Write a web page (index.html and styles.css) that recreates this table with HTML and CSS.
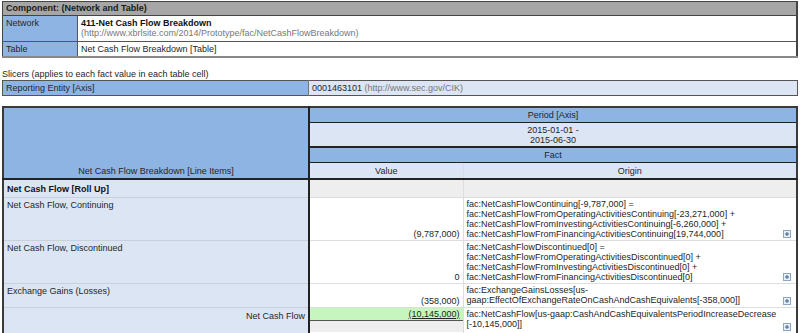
FILE: index.html
```html
<!DOCTYPE html>
<html lang="en">
<head>
    <meta charset="UTF-8">
    <title>411-Net Cash Flow Breakdown</title>
    <link rel="stylesheet" href="styles.css">
</head>
<body>
    <table class="component">
        <colgroup><col class="c-key"><col></colgroup>
        <tr class="title-row"><th colspan="2">Component: (Network and Table)</th></tr>
        <tr class="network-row">
            <td class="key">Network</td>
            <td><b>411-Net Cash Flow Breakdown</b><br><span class="uri">(http://www.xbrlsite.com/2014/Prototype/fac/NetCashFlowBreakdown)</span></td>
        </tr>
        <tr class="table-row">
            <td class="key">Table</td>
            <td>Net Cash Flow Breakdown [Table]</td>
        </tr>
    </table>

    <div class="caption">Slicers (applies to each fact value in each table cell)</div>
    <table class="slicers">
        <colgroup><col class="c-label"><col></colgroup>
        <tr>
            <td class="key">Reporting Entity [Axis]</td>
            <td class="member-val">0001463101 <span class="uri">(http://www.sec.gov/CIK)</span></td>
        </tr>
    </table>

    <table class="grid">
        <colgroup><col class="c-label"><col class="c-value"><col></colgroup>
        <tr class="h1">
            <th rowspan="4" class="corner">Net Cash Flow Breakdown [Line Items]</th>
            <th colspan="2" class="axis">Period [Axis]</th>
        </tr>
        <tr class="h2"><th colspan="2" class="member">2015-01-01 -<br>2015-06-30</th></tr>
        <tr class="h3"><th colspan="2" class="axis">Fact</th></tr>
        <tr class="h4">
            <th class="member">Value</th>
            <th class="member">Origin</th>
        </tr>
        <tr class="r-abstract">
            <td class="label"><b>Net Cash Flow [Roll Up]</b></td>
            <td class="blank"></td>
            <td class="blank"></td>
        </tr>
        <tr class="r-tall">
            <td class="label">Net Cash Flow, Continuing</td>
            <td class="value">(9,787,000)</td>
            <td class="origin">
                <div class="formula">fac:NetCashFlowContinuing[-9,787,000] =<br>fac:NetCashFlowFromOperatingActivitiesContinuing[-23,271,000] +<br>fac:NetCashFlowFromInvestingActivitiesContinuing[-6,260,000] +<br>fac:NetCashFlowFromFinancingActivitiesContinuing[19,744,000]</div>
                <svg class="expand" width="8" height="8" viewBox="0 0 8 8"><rect x="0.5" y="0.5" width="7" height="7" fill="#e6eef8" stroke="#8ea6c6"/><path d="M2 4h4M4 2v4" stroke="#3b5f8f" stroke-width="1"/></svg>
            </td>
        </tr>
        <tr class="r-tall">
            <td class="label">Net Cash Flow, Discontinued</td>
            <td class="value">0</td>
            <td class="origin">
                <div class="formula">fac:NetCashFlowDiscontinued[0] =<br>fac:NetCashFlowFromOperatingActivitiesDiscontinued[0] +<br>fac:NetCashFlowFromInvestingActivitiesDiscontinued[0] +<br>fac:NetCashFlowFromFinancingActivitiesDiscontinued[0]</div>
                <svg class="expand" width="8" height="8" viewBox="0 0 8 8"><rect x="0.5" y="0.5" width="7" height="7" fill="#e6eef8" stroke="#8ea6c6"/><path d="M2 4h4M4 2v4" stroke="#3b5f8f" stroke-width="1"/></svg>
            </td>
        </tr>
        <tr class="r-mid">
            <td class="label">Exchange Gains (Losses)</td>
            <td class="value">(358,000)</td>
            <td class="origin">
                <div class="formula">fac:ExchangeGainsLosses[us-<br>gaap:EffectOfExchangeRateOnCashAndCashEquivalents[-358,000]]</div>
                <svg class="expand" width="8" height="8" viewBox="0 0 8 8"><rect x="0.5" y="0.5" width="7" height="7" fill="#e6eef8" stroke="#8ea6c6"/><path d="M2 4h4M4 2v4" stroke="#3b5f8f" stroke-width="1"/></svg>
            </td>
        </tr>
        <tr class="r-total">
            <td class="label total-label">Net Cash Flow</td>
            <td class="value total-value">
                <div class="total-fill">(10,145,000)</div>
                <div class="total-rest"></div>
            </td>
            <td class="origin">
                <div class="formula">fac:NetCashFlow[us-gaap:CashAndCashEquivalentsPeriodIncreaseDecrease<br>[-10,145,000]]</div>
                <svg class="expand" width="8" height="8" viewBox="0 0 8 8"><rect x="0.5" y="0.5" width="7" height="7" fill="#e6eef8" stroke="#8ea6c6"/><path d="M2 4h4M4 2v4" stroke="#3b5f8f" stroke-width="1"/></svg>
            </td>
        </tr>
    </table>
</body>
</html>
```

FILE: styles.css
```css
body {
    margin: 1px 2px;
    font-family: "Liberation Sans", Arial, sans-serif;
    font-size: 9px;
    line-height: 10px;
    color: #262626;
    background: #fff;
}

table {
    border-collapse: collapse;
    width: 796px;
    table-layout: fixed;
}

td,
th {
    padding: 0 3px;
    font-weight: normal;
    text-align: left;
    vertical-align: top;
}

.uri {
    color: #777;
}

.c-key {
    width: 75px;
}

.c-label {
    width: 306px;
}

.c-value {
    width: 154px;
}

/* component header */
.component {
    border: 1px solid #444;
    border-right-width: 2px;
    border-bottom-width: 2px;
    border-bottom-color: #888;
}

.component th {
    background-color: #a6a6a6;
    font-weight: bold;
    color: #1a1a1a;
    height: 12px;
    padding-top: 1px;
    border-bottom: 1px solid #444;
}

.component td {
    border-top: 1px solid #555;
    padding-top: 2px;
}

.component .key {
    background-color: #8db4e2;
    border-right: 1px solid #555;
}

.network-row td {
    height: 23px;
}

.network-row b {
    color: #111;
}

.table-row td {
    height: 12px;
}

.caption {
    margin-top: 12px;
    height: 9px;
    line-height: 9px;
}

.slicers {
    margin-top: 1px;
    border: 1px solid #555;
}

.slicers td {
    height: 12px;
    padding-top: 2px;
    background-color: #dbe5f3;
}

.slicers .key {
    background-color: #8db4e2;
    border-right: 1px solid #777;
}

/* fact grid */
.grid {
    margin-top: 10px;
    border: 2px solid #3a3a3a;
}

.grid th {
    text-align: center;
    border-left: 2px solid #222;
}

.grid .corner {
    border-left: none;
    background-color: #8db4e2;
    vertical-align: bottom;
    padding-bottom: 2px;
}

.grid .axis {
    background-color: #8db4e2;
    vertical-align: middle;
}

.grid .member {
    background-color: #dbe5f3;
    vertical-align: middle;
}

.h1 th.axis {
    height: 14px;
    border-bottom: 1px solid #222;
}

.h2 th {
    height: 23px;
    border-bottom: 2px solid #222;
}

.h3 th {
    height: 14px;
}

.h4 th {
    height: 15px;
    border-top: 1px solid #222;
}

.h4 th + th {
    border-left: 1px solid #d4dce6;
}

.grid .label {
    background-color: #dbe5f3;
    padding-top: 2px;
    border-bottom: 1px solid #c8d0da;
}

.grid td + td {
    border-left: 1px solid #ddd;
    border-bottom: 1px solid #ddd;
}

.grid td.value,
.grid td.blank:nth-child(2) {
    border-left: 2px solid #222;
}

.blank {
    background-color: #eeeeee;
}

.r-abstract td {
    border-top: 2px solid #222;
    height: 17px;
    vertical-align: middle;
}

.grid .r-abstract .label {
    padding-top: 0;
}

.r-abstract .label b {
    color: #111;
}

.r-tall td {
    height: 40px;
}

.r-mid td {
    height: 21px;
}

.r-total td {
    height: 22px;
}

.value {
    text-align: right;
    vertical-align: bottom;
    padding-bottom: 1px;
}

.origin {
    position: relative;
    padding-top: 1px;
}

.formula {
    padding-right: 12px;
}

.expand {
    position: absolute;
    right: 5px;
    bottom: 2px;
}

.grid .total-label {
    text-align: right;
    padding-top: 3px;
}

.grid td.total-value {
    padding: 0;
    vertical-align: top;
}

.total-fill {
    height: 10px;
    padding: 1px 3px 1px;
    background-color: #c6f5be;
    border-bottom: 1px solid #555;
    text-decoration: underline;
    line-height: 11px;
}

.total-rest {
    height: 11px;
    background-color: #eeeeee;
}
```
